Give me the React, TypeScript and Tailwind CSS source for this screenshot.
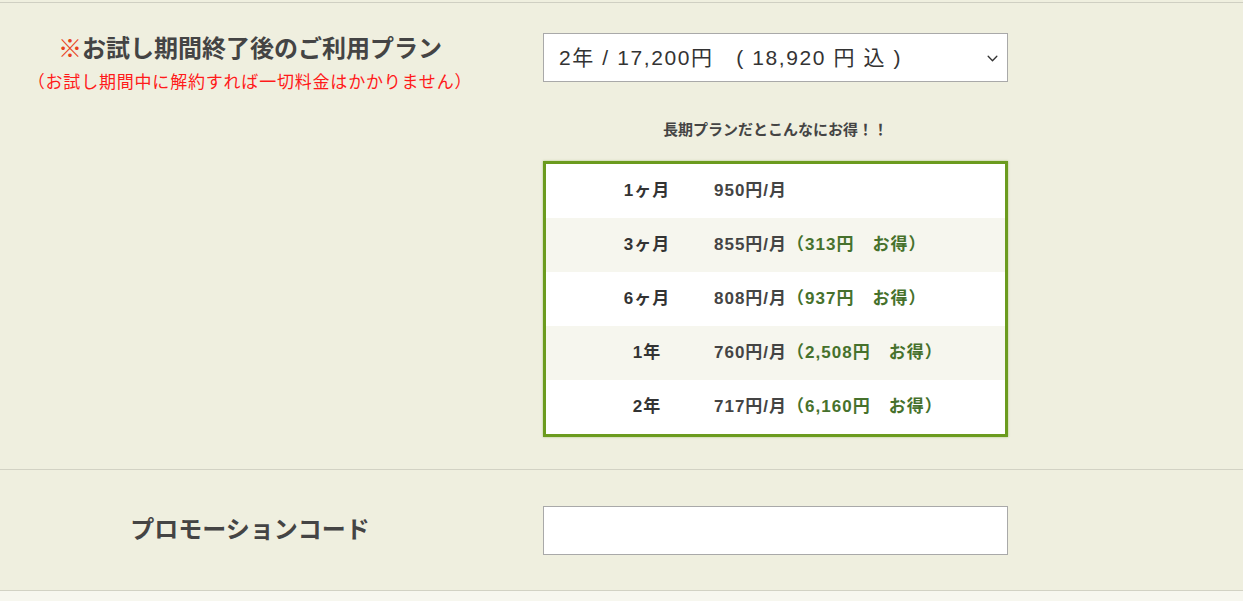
import React from 'react';

const plans = [
  { term: '1ヶ月', price: '950円/月', save: '' },
  { term: '3ヶ月', price: '855円/月', save: '（313円　お得）' },
  { term: '6ヶ月', price: '808円/月', save: '（937円　お得）' },
  { term: '1年', price: '760円/月', save: '（2,508円　お得）' },
  { term: '2年', price: '717円/月', save: '（6,160円　お得）' },
];

const App: React.FC = () => {
  return (
    <div
      className="min-h-[601px] bg-[#f7f7ef] text-[#333]"
      style={{ fontFamily: '"Liberation Sans", "Noto Sans CJK JP", sans-serif' }}
    >
      <div className="h-[2px] bg-[#efefdf]" />
      <div className="bg-[#efefdf] border-t border-[#cfcfc2]">
        {/* plan row */}
        <div className="flex pt-[28px] pb-[32px] border-b border-[#d2d2c4]">
          <div className="w-[500px] flex flex-col items-center">
            <h3 className="text-[24px] leading-[36px] font-bold text-[#444]">
              <span className="text-[#e8431c]">※</span>お試し期間終了後のご利用プラン
            </h3>
            <p className="text-[17px] leading-[24px] tracking-[0.8px] text-[#ff1a1a] mt-[4px]">
              （お試し期間中に解約すれば一切料金はかかりません）
            </p>
          </div>
          <div className="ml-[43px] w-[465px] flex flex-col pt-[2px]">
            <div className="relative h-[49px] bg-white border border-[#a9a9a9] flex items-center pl-[15px]">
              <span className="text-[21px] tracking-[1.6px] text-[#333]">2年 / 17,200円　( 18,920 円 込 )</span>
              <svg className="absolute right-[8px] top-[18px]" width="13" height="13" viewBox="0 0 24 24" fill="none" stroke="#333" strokeWidth="2.5" strokeLinecap="round" strokeLinejoin="round">
                <path d="M4 8l8 8 8-8" />
              </svg>
            </div>
            <p className="mt-[37px] text-center text-[15px] leading-[22px] font-bold text-[#444]">
              長期プランだとこんなにお得！！
            </p>
            <div className="mt-[20px] border-[3px] border-[#6b9b1e] bg-white shadow-[0_0_2px_rgba(107,155,30,0.5)]">
              {plans.map((p, i) => (
                <div
                  key={p.term}
                  className={`flex items-center h-[54px] text-[17px] tracking-[1px] font-bold ${i % 2 === 1 ? 'bg-[#f6f6ee]' : 'bg-white'}`}
                >
                  <div className="ml-[34px] w-[134px] text-center text-[#333]">{p.term}</div>
                  <div>
                    <span className="text-[#444]">{p.price}</span>
                    <span className="text-[#46712c]">{p.save}</span>
                  </div>
                </div>
              ))}
            </div>
          </div>
        </div>
        {/* promo row */}
        <div className="flex items-center h-[121px] border-b border-[#d2d2c4]">
          <div className="w-[500px] text-center text-[24px] font-bold text-[#444]">プロモーションコード</div>
          <input className="ml-[43px] w-[465px] h-[49px] bg-white border border-[#a9a9a9] outline-none" />
        </div>
      </div>
    </div>
  );
};

export default App;
